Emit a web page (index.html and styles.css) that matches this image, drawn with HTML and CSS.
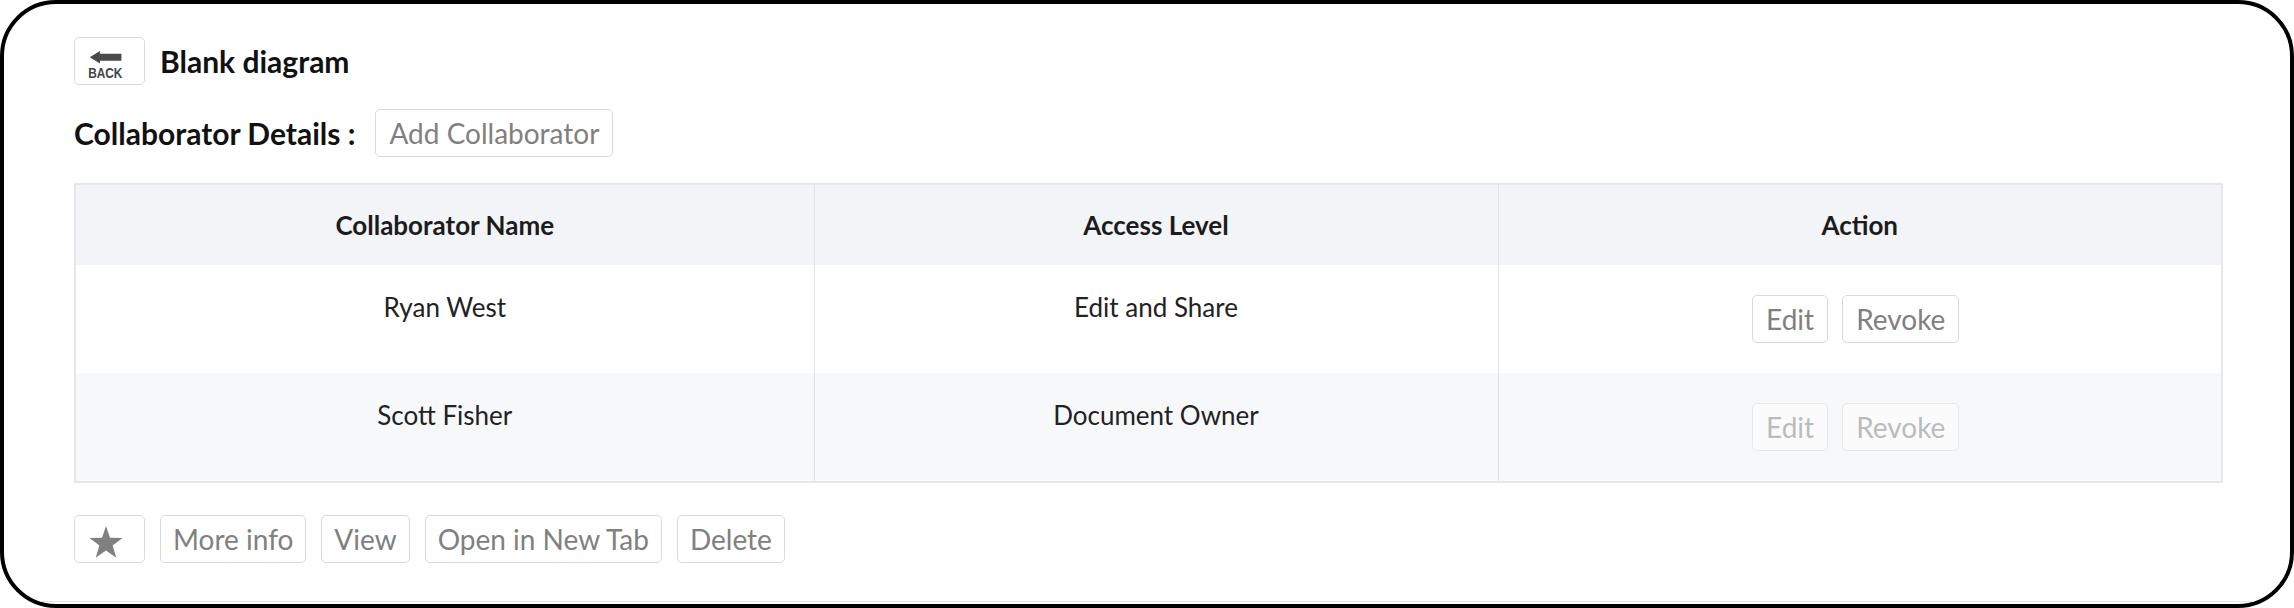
FILE: index.html
```html
<!DOCTYPE html>
<html lang="en">
<head>
<meta charset="utf-8">
<title>Blank diagram - Collaborators</title>
<link rel="stylesheet" href="styles.css">
</head>
<body>
<div class="frame">
  <div class="page">
    <div class="title-row">
      <button class="btn back-btn" aria-label="Back">
        <svg class="back-icon" width="69" height="46" viewBox="0 0 69 46">
          <polygon points="14.7,19.3 25,13 25,15.8 46.4,15.8 46.4,22.8 25,22.8 25,25.6" fill="#4a4a4a"/>
          <text x="13.2" y="39.6" font-family="Liberation Sans, Arial, sans-serif" font-weight="bold" font-size="14" textLength="34.2" lengthAdjust="spacingAndGlyphs" fill="#444">BACK</text>
        </svg>
      </button>
      <h1 class="title">Blank diagram</h1>
    </div>

    <div class="collab-row">
      <h2 class="section-title">Collaborator Details :</h2>
      <button class="btn">Add Collaborator</button>
    </div>

    <table class="collab-table">
      <colgroup>
        <col class="col-name">
        <col class="col-access">
        <col class="col-action">
      </colgroup>
      <thead>
        <tr>
          <th>Collaborator Name</th>
          <th>Access Level</th>
          <th>Action</th>
        </tr>
      </thead>
      <tbody>
        <tr>
          <td>Ryan West</td>
          <td>Edit and Share</td>
          <td class="actions">
            <div class="action-group">
              <button class="btn">Edit</button>
              <button class="btn">Revoke</button>
            </div>
          </td>
        </tr>
        <tr class="alt">
          <td>Scott Fisher</td>
          <td>Document Owner</td>
          <td class="actions">
            <div class="action-group">
              <button class="btn" disabled>Edit</button>
              <button class="btn" disabled>Revoke</button>
            </div>
          </td>
        </tr>
      </tbody>
    </table>

    <div class="footer-actions">
      <button class="btn star-btn" aria-label="Favourite">
        <svg width="34" height="33" viewBox="0 0 34 33">
          <polygon points="17,0 21,11.8 33.6,12 23.6,19.6 27.3,31.8 17,24.5 6.7,31.8 10.4,19.6 0.4,12 13,11.8" fill="#808080"/>
        </svg>
      </button>
      <button class="btn">More info</button>
      <button class="btn">View</button>
      <button class="btn">Open in New Tab</button>
      <button class="btn">Delete</button>
    </div>
  </div>
</div>
</body>
</html>
```

FILE: styles.css
```css
html, body {
  margin: 0;
  padding: 0;
  background: #fff;
}

.frame {
  width: 2294px;
  height: 608px;
  box-sizing: border-box;
  border: 4px solid #000;
  border-radius: 56px;
  overflow: hidden;
  background: #fff;
  font-family: Lato, "Noto Sans", Arial, sans-serif;
}

.page {
  box-sizing: border-box;
  height: 598px;
  border-bottom: 1px solid #e6e6e6;
  padding: 33px 70px 0;
  display: flex;
  flex-direction: column;
  align-items: flex-start;
}

.btn {
  font-family: inherit;
  font-size: 28px;
  line-height: 34px;
  padding: 6px 13px;
  margin: 0;
  border: 1px solid #d6dadd;
  border-radius: 5px;
  background: #fff;
  color: #808080;
  cursor: pointer;
}

.btn:disabled {
  opacity: 0.5;
  cursor: default;
}

.title-row {
  display: flex;
  align-items: center;
  gap: 15px;
  height: 48px;
}

.back-btn {
  width: 71px;
  height: 48px;
  padding: 0;
  display: flex;
}

.back-icon {
  display: block;
}

.title {
  margin: 0;
  font-size: 30px;
  font-weight: 700;
  line-height: 36px;
  color: #111;
}

.collab-row {
  display: flex;
  align-items: center;
  gap: 20px;
  margin-top: 24px;
}

.section-title {
  margin: 0;
  font-size: 30px;
  font-weight: 700;
  line-height: 36px;
  color: #111;
}

.collab-table {
  margin-top: 26px;
  width: 2147px;
  table-layout: fixed;
  border-collapse: collapse;
  border: 2px solid #e6e7e9;
  font-size: 26px;
  color: #222;
}

.col-name { width: 739px; }
.col-access { width: 684px; }
.col-action { width: 724px; }

.collab-table th {
  background: #f3f4f7;
  padding: 21px 24px;
  line-height: 38px;
  font-weight: 700;
  color: #1c1c1c;
  text-align: center;
  border-left: 1px solid #e2e3e5;
}

.collab-table td {
  padding: 23px 24px;
  line-height: 38px;
  text-align: center;
  vertical-align: top;
  border-left: 1px solid #e2e3e5;
  background: #fff;
}

.collab-table tr.alt td {
  background: #f7f8fa;
}

.collab-table td.actions {
  vertical-align: middle;
  padding: 24px 32px 24px 24px;
}

.action-group {
  display: inline-flex;
  gap: 14px;
  margin: 6px 0;
}

.footer-actions {
  display: flex;
  gap: 15px;
  margin-top: 32px;
}

.footer-actions .btn {
  padding-left: 12px;
  padding-right: 12px;
}

.footer-actions .star-btn {
  width: 71px;
  height: 48px;
  padding: 10px 0 0 14px;
  display: flex;
  align-items: flex-start;
}

.star-btn svg {
  display: block;
}
```
